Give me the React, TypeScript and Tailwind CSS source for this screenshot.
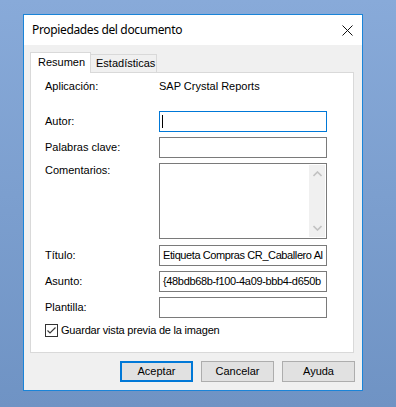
import React from 'react'

const FIELD = 'h-[21px] w-[168px] border border-[#7a7a7a] bg-white'

function Row({
  label,
  children,
  className = '',
  labelPad = 'pt-[4px]',
}: {
  label: string
  children: React.ReactNode
  className?: string
  labelPad?: string
}) {
  return (
    <div className={`flex items-start ${className}`}>
      <div className={`w-[128px] pl-[14px] leading-[13px] ${labelPad}`}>{label}</div>
      {children}
    </div>
  )
}

function Chevron({ up }: { up?: boolean }) {
  return (
    <svg width="9" height="6" viewBox="0 0 9 6" className="block">
      <path
        d={up ? 'M0.5 5 L4.5 1 L8.5 5' : 'M0.5 1 L4.5 5 L8.5 1'}
        fill="none"
        stroke="#c2c2c2"
        strokeWidth="1.6"
      />
    </svg>
  )
}

export default function App() {
  return (
    <div
      className="w-[396px] h-[407px] overflow-hidden bg-gradient-to-b from-[#88aad9] to-[#6f93c4] pl-[23px] pt-[14px] text-[11px] text-black"
      style={{ fontFamily: '"Liberation Sans", Arial, sans-serif' }}
    >
      <div className="w-[340px] h-[377px] border border-[#1a84d8] flex flex-col">
        {/* title bar */}
        <div className="h-[30px] bg-white flex items-center justify-between pl-[8px] pr-[9px]">
          <span
            className="text-[12px] tracking-[-0.35px]"
            style={{ fontFamily: '"Noto Sans", "Open Sans", sans-serif' }}
          >
            Propiedades del documento
          </span>
          <svg width="11" height="11" viewBox="0 0 11 11" className="block">
            <path d="M0.5 0.5 L10.5 10.5 M10.5 0.5 L0.5 10.5" stroke="#111" strokeWidth="1" />
          </svg>
        </div>

        {/* client area */}
        <div className="flex-1 bg-[#f0f0f0] pl-[6px] pr-[8px] pt-[7px] flex flex-col">
          <div className="relative z-10 flex items-end h-[21px] -mb-px">
            <div className="h-[21px] w-[61px] border-t border-l border-r border-[#d9d9d9] bg-white flex items-center pl-[7px] pb-[1px] relative z-10">
              Resumen
            </div>
            <div className="h-[19px] w-[67px] -ml-px border border-[#d9d9d9] bg-[#f0f0f0] flex items-center pl-[5px]">
              Estadísticas
            </div>
          </div>

          <div className="h-[281px] w-[324px] border border-[#d9d9d9] bg-white flex flex-col">
            <div className="flex items-center mt-[6px] h-[14px]">
              <div className="w-[128px] pl-[14px]">Aplicación:</div>
              <div>SAP Crystal Reports</div>
            </div>

            <Row label="Autor:" className="mt-[18px]">
              <div className="h-[21px] w-[168px] border border-[#0078d7] bg-white flex items-center pl-[2px]">
                <div className="w-px h-[13px] bg-black" />
              </div>
            </Row>

            <Row label="Palabras clave:" className="mt-[5px]">
              <div className={FIELD} />
            </Row>

            <Row label="Comentarios:" className="mt-[5px]" labelPad="pt-[1px]">
              <div className="h-[76px] w-[168px] border border-[#7a7a7a] bg-white flex justify-end p-px">
                <div className="w-[16px] h-full bg-[#f0f0f0] flex flex-col items-center justify-between py-[6px]">
                  <Chevron up />
                  <Chevron />
                </div>
              </div>
            </Row>

            <Row label="Título:" className="mt-[6px]">
              <div className={`${FIELD} overflow-hidden whitespace-nowrap pl-[3px] pt-[3px] leading-[13px] tracking-[-0.4px]`}>
                Etiqueta Compras CR_Caballero Al
              </div>
            </Row>

            <Row label="Asunto:" className="mt-[5px]">
              <div className={`${FIELD} overflow-hidden whitespace-nowrap pl-[3px] pt-[3px] leading-[13px] tracking-[-0.35px]`}>
                {'{48bdb68b-f100-4a09-bbb4-d650b'}
              </div>
            </Row>

            <Row label="Plantilla:" className="mt-[5px]">
              <div className={FIELD} />
            </Row>

            <div className="flex items-center mt-[4px] pl-[14px]">
              <div className="w-[13px] h-[13px] border border-[#333] bg-white flex items-center justify-center">
                <svg width="11" height="11" viewBox="0 0 11 11" className="block">
                  <path d="M1.5 5.5 L4 8 L9.5 2.5" fill="none" stroke="#3a3a3a" strokeWidth="1.2" />
                </svg>
              </div>
              <span className="ml-[3px] tracking-[-0.2px]">Guardar vista previa de la imagen</span>
            </div>
          </div>

          <div className="flex justify-end gap-[8px] mt-[8px] -mr-px">
            <button className="h-[21px] w-[73px] border-2 border-[#0078d7] bg-[#e1e1e1] text-[11px]">
              Aceptar
            </button>
            <button className="h-[21px] w-[73px] border border-[#adadad] bg-[#e1e1e1] text-[11px]">
              Cancelar
            </button>
            <button className="h-[21px] w-[73px] border border-[#adadad] bg-[#e1e1e1] text-[11px]">
              Ayuda
            </button>
          </div>
        </div>
      </div>
    </div>
  )
}
